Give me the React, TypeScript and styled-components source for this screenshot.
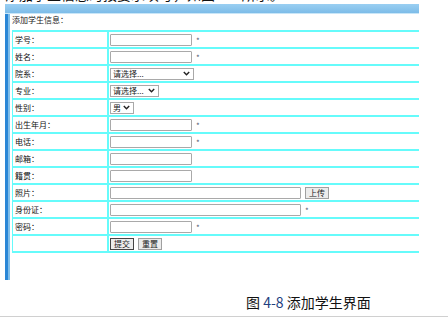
import styled, { createGlobalStyle } from "styled-components";

const GlobalStyle = createGlobalStyle`
  html, body {
    margin: 0;
    padding: 0;
    background: #ffffff;
  }
  body {
    font-family: "Noto Sans CJK SC", "Liberation Sans", sans-serif;
  }
`;

const Page = styled.div`
  width: 448px;
  height: 320px;
  overflow: hidden;
  display: flex;
  flex-direction: column;
  background: #fff;
`;

const CutLine = styled.div`
  height: 4px;
  overflow: hidden;
  padding-left: 5px;
  span {
    display: block;
    margin-top: -14px;
    font-size: 14px;
    line-height: 16px;
    color: #111;
    white-space: nowrap;
  }
`;

const Frame = styled.div`
  margin-left: 5px;
  width: 414px;
  height: 276px;
  display: flex;
  flex-direction: column;
`;

const TitleBar = styled.div`
  height: 9px;
  background: linear-gradient(#9acff2, #7dbce8);
  border-bottom: 1px solid #c9e6f8;
`;

const Body = styled.div`
  flex: 1;
  display: flex;
`;

const Stripe = styled.div`
  width: 7px;
  background: linear-gradient(to right, #2a86d6 0, #2a86d6 3px, #7fbde9 3px, #7fbde9 5px, #ffffff 5px);
`;

const Content = styled.div`
  flex: 1;
  display: flex;
  flex-direction: column;
`;

const Heading = styled.div`
  height: 15px;
  font-size: 8px;
  line-height: 10px;
  color: #222;
  padding-top: 1px;
`;

const Table = styled.div`
  border-top: 2px solid #66fbfb;
  border-left: 1px solid #66fbfb;
`;

const Row = styled.div`
  display: flex;
  height: 15px;
  border-bottom: 2px solid #66fbfb;
`;

const Label = styled.div`
  width: 92px;
  padding-left: 2px;
  border-right: 2px solid #66fbfb;
  font-size: 8px;
  line-height: 15px;
  color: #111;
`;

const Value = styled.div`
  flex: 1;
  display: flex;
  align-items: center;
  gap: 4px;
  padding-left: 1px;
`;

const Field = styled.div<{ $w: number }>`
  width: ${(p) => p.$w}px;
  height: 12px;
  box-sizing: border-box;
  border: 1px solid #a9a9a9;
  border-radius: 1px;
  background: #fff;
`;

const Star = styled.span`
  font-size: 8px;
  color: #555a70;
  line-height: 8px;
  margin-top: 3px;
`;

const Select = styled.div<{ $w: number }>`
  width: ${(p) => p.$w}px;
  height: 12px;
  box-sizing: border-box;
  border: 1px solid #a9a9a9;
  display: flex;
  align-items: center;
  justify-content: space-between;
  padding: 0 3px 0 2px;
  font-size: 8px;
  color: #222;
  background: #fff;
`;

const Btn = styled.div<{ $dark?: boolean }>`
  height: 12px;
  box-sizing: border-box;
  padding: 0 3px;
  border: 1px solid ${(p) => (p.$dark ? "#444" : "#a0a0a0")};
  background: #ececec;
  font-size: 8px;
  line-height: 10px;
  color: #222;
`;

const Caption = styled.div`
  margin-top: 14px;
  padding-left: 246px;
  font-size: 14px;
  line-height: 17px;
  color: #111;
  span {
    color: #1f3f80;
  }
`;

const Rule = styled.div`
  margin-top: 5px;
  height: 1px;
  background: #d0d0d0;
`;

const Chevron = () => (
  <svg width="7" height="5" viewBox="0 0 7 5">
    <path d="M0.8 1 L3.5 3.8 L6.2 1" fill="none" stroke="#222" strokeWidth="1.4" />
  </svg>
);

type Item =
  | { label: string; kind: "text"; w: number; star?: boolean }
  | { label: string; kind: "select"; w: number; text: string }
  | { label: string; kind: "upload"; w: number };

const items: Item[] = [
  { label: "学号：", kind: "text", w: 82, star: true },
  { label: "姓名：", kind: "text", w: 82, star: true },
  { label: "院系：", kind: "select", w: 84, text: "请选择..." },
  { label: "专业：", kind: "select", w: 49, text: "请选择..." },
  { label: "性别：", kind: "select", w: 24, text: "男" },
  { label: "出生年月：", kind: "text", w: 82, star: true },
  { label: "电话：", kind: "text", w: 82, star: true },
  { label: "邮箱：", kind: "text", w: 82 },
  { label: "籍贯：", kind: "text", w: 82 },
  { label: "照片：", kind: "upload", w: 191 },
  { label: "身份证：", kind: "text", w: 191, star: true },
  { label: "密码：", kind: "text", w: 82, star: true },
];

export default function App() {
  return (
    <>
      <GlobalStyle />
      <Page>
        <CutLine>
          <span>添加学生信息时按要求填写，如图 4-8 所示。</span>
        </CutLine>
        <Frame>
          <TitleBar />
          <Body>
            <Stripe />
            <Content>
              <Heading>添加学生信息：</Heading>
              <Table>
                {items.map((it) => (
                  <Row key={it.label}>
                    <Label>{it.label}</Label>
                    <Value>
                      {it.kind === "select" ? (
                        <Select $w={it.w}>
                          {it.text}
                          <Chevron />
                        </Select>
                      ) : (
                        <Field $w={it.w} />
                      )}
                      {it.kind === "upload" && <Btn>上传</Btn>}
                      {it.kind === "text" && it.star && <Star>*</Star>}
                    </Value>
                  </Row>
                ))}
                <Row>
                  <Label />
                  <Value>
                    <Btn $dark>提交</Btn>
                    <Btn>重置</Btn>
                  </Value>
                </Row>
              </Table>
            </Content>
          </Body>
        </Frame>
        <Caption>
          图 <span>4-8</span> 添加学生界面
        </Caption>
        <Rule />
      </Page>
    </>
  );
}
